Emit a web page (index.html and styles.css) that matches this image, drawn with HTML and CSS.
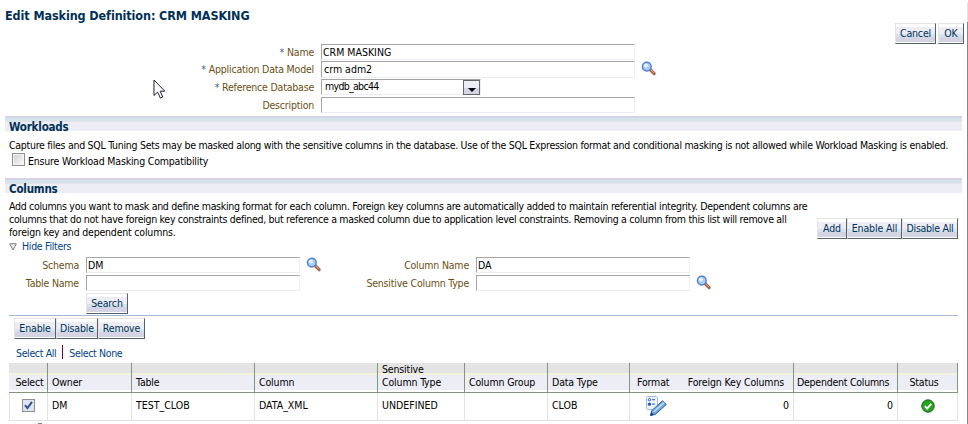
FILE: index.html
```html
<!DOCTYPE html>
<html lang="en">
<head>
<meta charset="utf-8">
<title>Edit Masking Definition</title>
<link rel="stylesheet" href="styles.css">
</head>
<body>
<svg class="defs" width="0" height="0">
  <symbol id="lens" viewBox="0 0 16 16">
    <path d="M9 8.5l4.2 4.2" stroke="#a8684c" stroke-width="3.2" stroke-linecap="round"/>
    <path d="M9.4 8.4l3.6 3.4" stroke="#dba78c" stroke-width="1"/>
    <circle cx="5.8" cy="5.6" r="4.4" fill="#a9cdf6" stroke="#4f7fd0" stroke-width="1.4"/>
    <circle cx="4.9" cy="4.5" r="2" fill="#e6f3ff"/>
  </symbol>
</svg>
<main class="page">
  <h1>Edit Masking Definition: CRM MASKING</h1>
  <div class="actions"><button class="b-ca">Cancel</button><button class="b-ok">OK</button></div>
  <form class="details">
    <label><i>*</i> Name</label><div class="field wide">CRM MASKING</div><span></span>
    <label><i>*</i> Application Data Model</label><div class="field wide adm">crm adm2</div><svg class="lens"><use href="#lens"/></svg>
    <label><i>*</i> Reference Database</label><div class="field select">mydb_abc44<b class="drop"></b></div><span></span>
    <label>Description</label><div class="field wide"></div><span></span>
  </form>
  <h2>Workloads</h2>
  <p class="workload-text">Capture files and SQL Tuning Sets may be masked along with the sensitive columns in the database. Use of the SQL Expression format and conditional masking is not allowed while Workload Masking is enabled.</p>
  <div class="compat"><span class="check"></span><span>Ensure Workload Masking Compatibility</span></div>
  <h2>Columns</h2>
  <div class="intro">
    <p>Add columns you want to mask and define masking format for each column. Foreign key columns are automatically added to maintain referential integrity. Dependent columns are<br>columns that do not have foreign key constraints defined, but reference a masked column due to application level constraints. Removing a column from this list will remove all<br><span class="short">foreign key and dependent columns.</span></p>
    <div class="group"><button class="b-add">Add</button><button class="b-ea">Enable All</button><button class="b-da">Disable All</button></div>
  </div>
  <div class="toggle"><svg width="8" height="8" viewBox="0 0 8 8"><path d="M.7 .8h6.6L4 7z" fill="#eee" stroke="#777"/></svg><a>Hide Filters</a></div>
  <div class="filters">
    <label>Schema</label><div class="field">DM</div><svg class="lens"><use href="#lens"/></svg>
    <label>Column Name</label><div class="field">DA</div><span></span>
    <label>Table Name</label><div class="field"></div><span></span>
    <label>Sensitive Column Type</label><div class="field"></div><svg class="lens"><use href="#lens"/></svg>
  </div>
  <div class="search"><button>Search</button></div>
  <div class="group bulk"><button class="b-en">Enable</button><button class="b-di">Disable</button><button class="b-re">Remove</button></div>
  <div class="links"><a>Select All</a><s></s><a>Select None</a></div>
  <table>
    <colgroup><col class="c1"><col class="c2"><col class="c3"><col class="c4"><col class="c5"><col class="c6"><col class="c7"><col class="c8"><col class="c9"><col class="c10"><col class="c11"></colgroup>
    <thead><tr><th class="mid">Select</th><th>Owner</th><th>Table</th><th>Column</th><th>Sensitive<br>Column Type</th><th>Column Group</th><th>Data Type</th><th class="fmt">Format</th><th class="num">Foreign Key Columns</th><th class="dep">Dependent Columns</th><th class="mid status">Status</th></tr></thead>
    <tbody><tr><td class="mid"><span class="check on"><svg viewBox="0 0 9 9" width="9" height="9"><path d="M1 4.2l2.4 3L8 .8" fill="none" stroke="#354f9b" stroke-width="2"/></svg></span></td><td>DM</td><td>TEST_CLOB</td><td>DATA_XML</td><td>UNDEFINED</td><td></td><td>CLOB</td>
    <td class="fmt"><svg class="edit" width="23" height="22" viewBox="0 0 23 22"><rect x="1.5" y="1.5" width="11" height="13" rx="1" fill="#f0f6ff" stroke="#9dbbe6"/><circle cx="4.5" cy="4.7" r="1.2" fill="#fff" stroke="#2f63b5"/><circle cx="4.5" cy="9.2" r="1.6" fill="#2555a8"/><path d="M7 4.6h3M7 9.2h3" stroke="#4a78bf" stroke-width="1.2"/><path d="M5.5 20.5l1.2-4.8L17.5 5.8l3.8 3.7L10.3 19.4z" fill="#72a7e4" stroke="#2c5da9"/><path d="M8.8 16.8L19 7.7" stroke="#c8e1fb" stroke-width="1.4"/><path d="M5.2 21l1-3.7 2.6 2.5z" fill="#173f7e"/></svg></td>
    <td class="num">0</td><td class="num">0</td><td class="mid"><svg class="ok" width="14" height="14" viewBox="0 0 14 14"><circle cx="7" cy="7" r="6.2" fill="#28a321" stroke="#16601b"/><path d="M3.8 7.2l2.3 2.4 4.2-4.8" fill="none" stroke="#fff" stroke-width="1.9"/></svg></td></tr></tbody>
  </table>
  <div class="next"></div>
</main>
<div class="rail"></div>
<svg class="pointer" width="14" height="21" viewBox="0 0 14 21"><path d="M1 1v15.5l3.6-3.4 2.8 6 2.4-1.1-2.7-5.8h4.7z" fill="#fff" stroke="#1d1d3c"/></svg>
</body>
</html>
```
FILE: styles.css
```css
*{box-sizing:border-box}
html,body{margin:0;height:424px;overflow:hidden;background:#fff}
body{display:flex;font:10.5px/13px "DejaVu Sans Condensed","DejaVu Sans",sans-serif;font-stretch:condensed;letter-spacing:-.3px;color:#000;white-space:nowrap}
.defs{position:absolute}
.pointer{position:absolute;left:153px;top:79px}
.page{width:967px;height:424px;overflow:hidden}
.rail{width:1px;height:421px;margin-top:3px;background:linear-gradient(#e4e4e4 19px,#888 19px)}
h1{margin:0;height:23px;padding:8px 0 0 5px;font-size:12.5px;line-height:15px;letter-spacing:-.1px;color:#003055}
.actions{display:flex;justify-content:flex-end;gap:2px;height:21px;padding-right:3px}
button{font:inherit;letter-spacing:-.15px;color:#003055;height:21px;margin:0;padding:0;width:42px;border:1px solid;border-color:#e4e4e4 #566069 #566069 #e4e4e4;border-radius:0;background:linear-gradient(#fff 3px,#ededf6 3px 10px,#d6e3ec 10px 13px,#d4d4e5 13px 18px,#fff 18px)}
.b-ca{width:41px}
.b-ok{width:26px}
.b-add{width:30px}
.b-ea{width:55px}
.b-da{width:56px;letter-spacing:-.25px}
.b-re{width:47px}
.details{display:grid;grid-template-columns:314px 314px 16px;column-gap:7px;grid-template-rows:17px 18px 18px 19px}
label{text-align:right;color:#6b5014;padding-top:2px;letter-spacing:-.2px}
label i{font-style:normal;color:#3a5f8c}
.field{height:16px;border:1px solid #ededf6;border-top-color:#a5a5a5;border-left-color:#a5a5a5;padding:1px 0 0 1px;letter-spacing:0}
.adm{height:17px;padding:1px 0 0 2px}
.select{width:160px;display:flex;justify-content:space-between;padding:0 0 0 3px;letter-spacing:-.6px}
.select{letter-spacing:-.7px}
.drop{width:17px;height:15px;border:1px solid #666;background:linear-gradient(#ededf6 7px,#d4d4e5 7px);display:flex;justify-content:center;align-items:flex-end;padding-bottom:2px}
.drop:after{content:"";border:4px solid transparent;border-top-color:#000;border-bottom:0}
.lens{width:16px;height:16px;margin-left:-1px}
h2{margin:0 0 0 5px;width:957px;height:15px;padding:5px 0 0 4px;font-size:11.5px;line-height:13px;letter-spacing:-.2px;color:#003055;background:linear-gradient(#d4d4e5 2px,#d6e3ec 2px 5px,#e4e4e4 5px 6px,#ededf6 6px)}
p{margin:0}
.short{letter-spacing:-.2px}
.workload-text{padding:8px 0 0 9px;height:22px;letter-spacing:-.28px}
.compat{display:flex;gap:3px;padding:0 0 0 12px;height:25px;letter-spacing:-.19px}
.compat span+span{padding-top:2px}
.check{width:13px;height:13px;border:1px solid #8d8f92;background:linear-gradient(135deg,#ccc,#fff);display:inline-block}
.compat .check{box-shadow:inset 0 0 0 1px #f4f4f4}
.intro{display:flex;justify-content:space-between;padding:7px 9px 0 9px;height:47px}
.intro .group{padding-top:18px}
.group{display:flex}
.toggle{display:flex;align-items:center;gap:5px;height:17px;padding:0 0 4px 9px}
a{color:#003f87;letter-spacing:-.35px}
.toggle a{letter-spacing:-.3px}
.filters{display:grid;grid-template-columns:79px 214px 16px 139px 214px 16px;column-gap:7px;grid-template-rows:18px 18px}
.search{height:23px;margin:0 9px;padding-left:77px;border-bottom:1px solid #a5bad9}
.bulk{height:21px;margin:2px 0 0 14px}
.links{display:flex;gap:6px;height:24px;padding:8px 0 0 16px}
.links s{width:1px;height:14px;background:#660066;margin-top:-2px}
table{width:949px;margin-left:9px;border-collapse:separate;border-spacing:0;table-layout:fixed}
th,td{padding:0 3px 0 4px;text-align:left;font-weight:400;overflow:visible}
th{height:30px;vertical-align:bottom;padding-bottom:3px;border-bottom:1px solid #82957f;border-right:1px solid #82957f;background:linear-gradient(#e4e4e4 10px,#f2f2df 10px 12px,#ededf6 12px 27px,#fff 27px);letter-spacing:-.15px}
td{height:28px;padding-bottom:2px;border-bottom:1px solid #e0e0e0;border-right:1px solid #e4e4e4;letter-spacing:0}
td:first-child{border-left:1px solid #e4e4e4}
.mid{text-align:center;padding:0 0 3px}
th.mid{padding-left:3px}
th.status{padding:0 7px 3px 0}
th.dep{padding-left:3px;letter-spacing:-.25px}
th.fmt,td.fmt{border-right:0;padding-left:7px}
.num{text-align:right;padding-right:4px}
th.num{padding-right:9px}
.on{background:#dfe5ef;padding:1px;vertical-align:middle}
.on svg,.edit,.ok{display:block}
.ok{margin:2px auto 0}
.edit{margin-left:8px}
.c1{width:39px}.c2{width:84px}.c3{width:123px}.c4{width:123px}.c5{width:87px}.c6{width:83px}.c7{width:82px}.c8{width:46px}.c9{width:118px}.c10{width:104px}.c11{width:60px}
.next{width:4px;height:2px;margin:2px 0 0 38px;background:#7180ac}
```
